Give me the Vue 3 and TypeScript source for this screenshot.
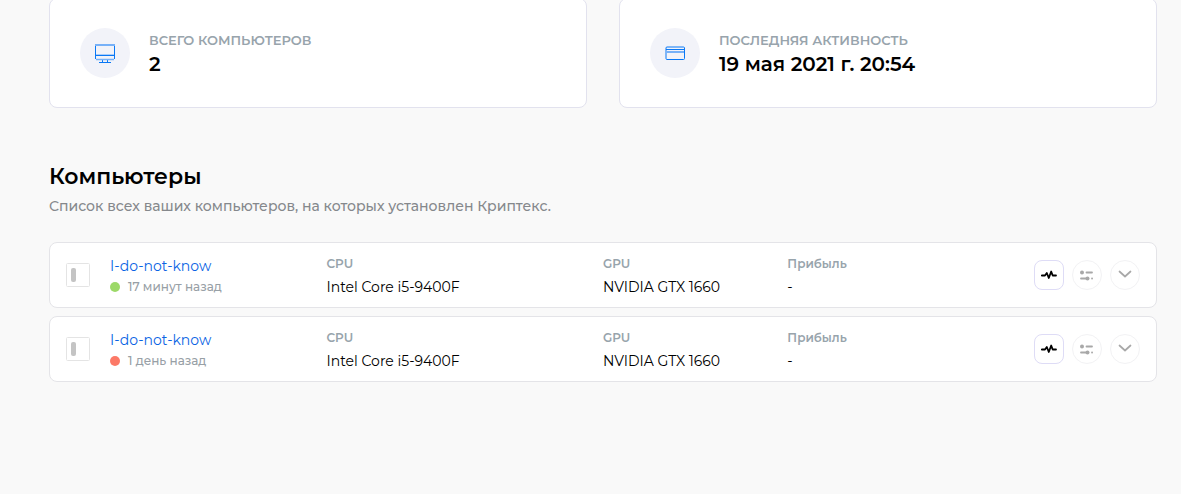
<script setup lang="ts">
interface Stat {
  icon: 'monitor' | 'card'
  label: string
  value: string
}

interface Computer {
  id: number
  name: string
  online: boolean
  seen: string
  cpu: string
  gpu: string
  profit: string
}

const stats: Stat[] = [
  { icon: 'monitor', label: 'ВСЕГО КОМПЬЮТЕРОВ', value: '2' },
  { icon: 'card', label: 'ПОСЛЕДНЯЯ АКТИВНОСТЬ', value: '19 мая 2021 г. 20:54' },
]

const computers: Computer[] = [
  { id: 1, name: 'I-do-not-know', online: true, seen: '17 минут назад', cpu: 'Intel Core i5-9400F', gpu: 'NVIDIA GTX 1660', profit: '-' },
  { id: 2, name: 'I-do-not-know', online: false, seen: '1 день назад', cpu: 'Intel Core i5-9400F', gpu: 'NVIDIA GTX 1660', profit: '-' },
]
</script>

<template>
  <main class="page">
    <section class="stats">
      <article v-for="stat in stats" :key="stat.label" class="stat">
        <span class="stat-icon">
          <svg v-if="stat.icon === 'monitor'" width="20" height="20" viewBox="0 0 20 20" fill="none" stroke="#0a78f5" aria-hidden="true">
            <path d="M.5 2v14M19.500 2v14M1 12.500h18M4 19.500h12M7.500 17v2.500M12.500 17v2.500" />
            <path d="M0 2h20" stroke="#77b1f8" stroke-width="2" />
            <path d="M1 11.500h18" stroke="#a8cdfa" />
            <path d="M1 16.500h18" stroke="#77b1f8" stroke-width="1.500" />
          </svg>
          <svg v-else width="20" height="20" viewBox="0 0 20 20" fill="none" stroke="#0a78f5" aria-hidden="true">
            <rect x="1" y="4" width="18.500" height="12.500" rx="1" />
            <path d="M1 6.500h18" />
            <path d="M1.500 9h17.500" stroke="#77b1f8" stroke-width="2" />
          </svg>
        </span>
        <div class="stat-text">
          <div class="stat-label">{{ stat.label }}</div>
          <div class="stat-value">{{ stat.value }}</div>
        </div>
      </article>
    </section>

    <h1>Компьютеры</h1>
    <p class="lead">Список всех ваших компьютеров, на которых установлен Криптекс.</p>

    <ul class="list">
      <li v-for="pc in computers" :key="pc.id" class="row">
        <div class="identity">
          <svg class="case" width="24" height="24" viewBox="0 0 24 24" aria-hidden="true">
            <rect x=".5" y=".5" width="23" height="23" rx="1" fill="#fff" stroke="#e4e4e4" />
            <rect x="5" y="5" width="5" height="14" rx="2" fill="#c4c4c4" />
          </svg>
          <div>
            <a class="name" href="#">{{ pc.name }}</a>
            <div class="seen"><i class="dot" :class="{ online: pc.online }"></i>{{ pc.seen }}</div>
          </div>
        </div>
        <div>
          <div class="label">CPU</div>
          <div class="value">{{ pc.cpu }}</div>
        </div>
        <div>
          <div class="label">GPU</div>
          <div class="value">{{ pc.gpu }}</div>
        </div>
        <div>
          <div class="label">Прибыль</div>
          <div class="value">{{ pc.profit }}</div>
        </div>
        <div class="actions">
          <button type="button" class="action square" aria-label="Мониторинг">
            <svg width="16" height="16" viewBox="0 0 16 16" fill="none" stroke="#000" stroke-width="1.800" stroke-linecap="round" stroke-linejoin="round" aria-hidden="true">
              <path d="M.800 8.500H4l1.800-2.500 2 5L10.200 4.500l1.500 4h3.300" />
            </svg>
          </button>
          <button type="button" class="action" aria-label="Настройки">
            <svg width="16" height="16" viewBox="0 0 16 16" fill="none" stroke="#a8a8a8" stroke-width="1.800" stroke-linecap="round" aria-hidden="true">
              <path d="M7.500 5.500h5.500M2 11.500h6M13 11.500h.1" />
              <circle cx="3" cy="5.500" r="2" fill="#a8a8a8" stroke="none" />
              <circle cx="8.500" cy="11.500" r="2" fill="#a8a8a8" stroke="none" />
            </svg>
          </button>
          <button type="button" class="action" aria-label="Развернуть">
            <svg width="16" height="16" viewBox="0 0 16 16" fill="none" stroke="#a8a8a8" stroke-width="1.700" stroke-linecap="round" stroke-linejoin="round" aria-hidden="true">
              <path d="M2.500 4.500 8 9.500l5.500-5" />
            </svg>
          </button>
        </div>
      </li>
    </ul>
  </main>
</template>

<style>
body {
  margin: 0;
  background: #f9f9f9;
}
</style>

<style scoped>
.page {
  padding: 0 24px 0 49px;
  font-family: Montserrat, Inter, "Noto Sans", sans-serif;
  font-size: 14px;
  line-height: 20px;
  color: #000;
}

.stats {
  display: grid;
  grid-template-columns: 1fr 1fr;
  gap: 32px;
  margin-top: -2px;
}

.stat {
  display: flex;
  align-items: center;
  gap: 19px;
  padding: 29px 30px;
  border: 1px solid #e2e2ee;
  border-radius: 8px;
  background: #fff;
}

.stat-icon {
  display: flex;
  align-items: center;
  justify-content: center;
  width: 50px;
  height: 50px;
  border-radius: 50%;
  background: #f2f3f9;
}

.stat-text {
  padding-top: 2px;
}

.stat-label {
  font-size: 13px;
  font-weight: 600;
  line-height: 20px;
  color: #98a4ac;
}

.stat-value {
  font-size: 20px;
  font-weight: 600;
  line-height: 28px;
}

h1 {
  margin: 53px 0 0;
  font-size: 22px;
  font-weight: 600;
  line-height: 32px;
}

.lead {
  margin: 3px 0 26px;
  font-weight: 500;
  color: #85888c;
}

.list {
  display: grid;
  gap: 8px;
  margin: 0;
  padding: 0;
  list-style: none;
}

.row {
  display: grid;
  grid-template-columns: 3fr 3fr 2fr 2fr 2fr;
  align-items: center;
  padding: 8px 0;
  border: 1px solid #e4e4e8;
  border-radius: 8px;
  background: #fff;
}

.identity {
  display: flex;
  align-items: center;
  gap: 20px;
  padding-left: 16px;
}

.name {
  display: block;
  line-height: 24px;
  color: #0a64e4;
  text-decoration: none;
}

.seen {
  display: flex;
  align-items: center;
  gap: 8px;
  font-size: 12px;
  font-weight: 500;
  line-height: 18px;
  color: #98a0a6;
}

.dot {
  width: 10px;
  height: 10px;
  border-radius: 50%;
  background: #fc7967;
}

.dot.online {
  background: #9cd968;
}

.label {
  padding-top: 2px;
  font-size: 12px;
  font-weight: 600;
  line-height: 22px;
  color: #98a4ac;
}

.value {
  line-height: 24px;
}

.actions {
  display: flex;
  justify-content: flex-end;
  gap: 8px;
  padding-right: 16px;
}

.action {
  display: flex;
  align-items: center;
  justify-content: center;
  width: 30px;
  height: 30px;
  padding: 0;
  border: 1px solid #f2f2f4;
  border-radius: 50%;
  background: #fff;
  cursor: pointer;
}

.action.square {
  border-color: #dedcf6;
  border-radius: 8px;
}
</style>
